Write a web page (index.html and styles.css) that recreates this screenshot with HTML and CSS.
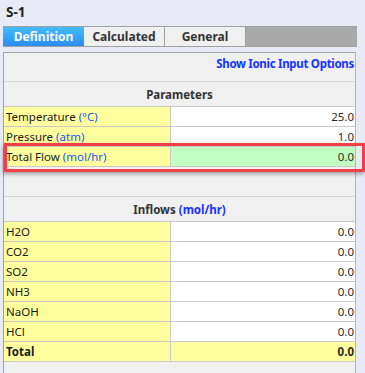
FILE: index.html
```html
<!DOCTYPE html>
<html lang="en">
<head>
    <meta charset="UTF-8">
    <title>S-1</title>
    <link rel="stylesheet" href="styles.css">
</head>
<body>
    <div class="panel">
        <div class="title">S-1</div>
        <div class="tabs">
            <div class="tab active">Definition</div>
            <div class="tab">Calculated</div>
            <div class="tab">General</div>
        </div>
        <div class="strip"></div>
        <div class="content">
            <div class="options"><a href="#">Show Ionic Input Options</a></div>

            <div class="section-head">Parameters</div>
            <div class="grid">
                <div class="label">Temperature <span class="unit">(°C)</span></div>
                <div class="value">25.0</div>
                <div class="label">Pressure <span class="unit">(atm)</span></div>
                <div class="value">1.0</div>
                <div class="label">Total Flow <span class="unit">(mol/hr)</span></div>
                <div class="value calc">0.0</div>
            </div>

            <div class="spacer"></div>

            <div class="section-head">Inflows <span class="unit">(mol/hr)</span></div>
            <div class="grid">
                <div class="label">H2O</div><div class="value">0.0</div>
                <div class="label">CO2</div><div class="value">0.0</div>
                <div class="label">SO2</div><div class="value">0.0</div>
                <div class="label">NH3</div><div class="value">0.0</div>
                <div class="label">NaOH</div><div class="value">0.0</div>
                <div class="label">HCl</div><div class="value">0.0</div>
                <div class="label total">Total</div><div class="value total">0.0</div>
            </div>
        </div>
        <div class="highlight"></div>
    </div>
</body>
</html>
```

FILE: styles.css
```css
* {
    margin: 0;
    padding: 0;
    box-sizing: border-box;
    font-family: 'Noto Sans', 'Liberation Sans', sans-serif;
}

body {
    width: 365px;
    height: 373px;
    overflow: hidden;
    background-color: #e8ebf5;
    color: #1a1a1a;
    font-size: 11.5px;
}

.panel {
    position: relative;
    height: 373px;
}

.title {
    height: 26px;
    padding-left: 6px;
    line-height: 25px;
    font-size: 13.5px;
    font-weight: 700;
    color: #222;
}

.tabs {
    display: flex;
    margin-left: 3px;
    width: 354px;
    height: 21px;
    background-color: #a9a9a9;
    border-top: 1px solid #a0a0a0;
    border-bottom: 1px solid #a0a0a0;
}

.tab {
    width: 81px;
    text-align: center;
    line-height: 19px;
    font-size: 12px;
    font-weight: 700;
    color: #333;
    background-color: #f0f0f0;
    border-right: 1px solid #a0a0a0;
}

.tab.active {
    color: white;
    background: linear-gradient(#44bbff, #2a8df2);
    border-right: none;
}

.strip {
    height: 5px;
}

.content {
    margin-left: 3px;
    width: 353px;
    height: 321px;
    background-color: #f0f0f0;
    border-top: 1px solid #a0a0a0;
    border-left: 1px solid #a0a0a0;
    border-right: 1px solid #b4b4b4;
}

.options {
    height: 29px;
    text-align: right;
    padding: 2px 1px 0 0;
    line-height: 18px;
    border-bottom: 1px solid #d6d6d6;
}

.options a {
    color: #1533ff;
    font-weight: 700;
    letter-spacing: -0.3px;
    text-decoration: none;
}

.unit {
    color: #2256e8;
}

.section-head {
    height: 25px;
    line-height: 25px;
    text-align: center;
    font-weight: 700;
    color: #333;
    border-bottom: 1px solid #c8c8c8;
}

.section-head .unit {
    color: #1533ff;
}

.grid {
    display: grid;
    grid-template-columns: 167px 1fr;
}

.label,
.value {
    height: 20px;
    line-height: 19px;
    border-bottom: 1px solid #c8c8c8;
    white-space: nowrap;
}

.label {
    padding-left: 2px;
    background-color: #ffff9e;
    border-right: 1px solid #c8c8c8;
}

.value {
    text-align: right;
    padding-right: 1px;
    background-color: white;
    color: #2a2a2a;
}

.value.calc {
    background-color: #c2ffc2;
}

.total {
    font-weight: 700;
}

.value.total {
    background-color: #ffff9e;
}

.spacer {
    height: 30px;
    border-bottom: 1px solid #d6d6d6;
}

.highlight {
    position: absolute;
    left: 4px;
    top: 143px;
    width: 361px;
    height: 29px;
    border: 3px solid #f04246;
    box-shadow: -1px 2px 4px rgba(0, 0, 0, 0.35);
}
```
